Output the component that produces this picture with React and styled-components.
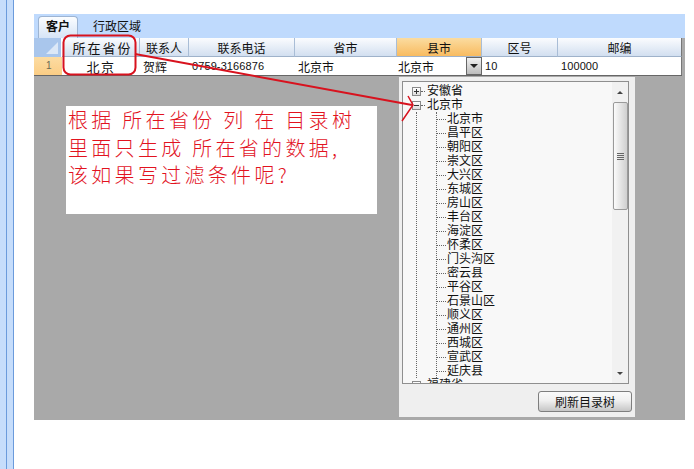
import React from "react";
import styled, { createGlobalStyle } from "styled-components";

const GlobalStyle = createGlobalStyle`
  html, body {
    margin: 0;
    padding: 0;
    background: #fff;
  }
  body {
    font-family: "Liberation Sans", "Noto Sans CJK SC", sans-serif;
    font-size: 12px;
    color: #111;
  }
`;

const Page = styled.div`
  display: flex;
  width: 694px;
  height: 469px;
  overflow: hidden;
  background: #fff;
`;

const Rail = styled.div`
  width: 6px;
  background: #c6ddfb;
  border-right: 1px solid #6b9bdc;
`;

const Main = styled.div`
  width: 651px;
  margin-left: 20px;
  padding-top: 14px;
  position: relative;
`;

const TabStrip = styled.div`
  display: flex;
  align-items: flex-end;
  height: 24px;
  padding-left: 4px;
  gap: 14px;
  background: #bfdafd;
`;

const Tab = styled.div`
  height: 22px;
  line-height: 20px;
  padding: 0 ${(p) => (p.$active ? "7px" : "0")};
  box-sizing: border-box;
  font-weight: ${(p) => (p.$active ? "bold" : "normal")};
  border: 1px solid ${(p) => (p.$active ? "#9db4d2" : "transparent")};
  border-bottom: none;
  border-radius: 4px 4px 0 0;
  background: ${(p) => (p.$active ? "linear-gradient(#fbfdff, #d6e4f6)" : "transparent")};
`;

const GridArea = styled.div`
  background: #a9a9a9;
`;

const Grid = styled.div`
  display: grid;
  width: 648px;
  grid-template-columns: 28px 78px 49px 106px 102px 85px 76px 124px;
  grid-template-rows: 19px 18px;
  border-bottom: 1px solid #666;
  box-sizing: border-box;
  height: 38px;
  background: #fff;
  box-shadow: inset -1px 0 0 #777;
`;

const Corner = styled.div`
  background: #a9c6ec;
  border-right: 1px solid #fff;
  display: flex;
  align-items: flex-end;
  justify-content: flex-end;
  padding: 0 3px 3px 0;
`;

const HeaderCell = styled.div`
  display: flex;
  align-items: center;
  justify-content: center;
  box-sizing: border-box;
  border-right: 1px solid ${(p) => (p.$last ? "#777" : "#a9bdd6")};
  border-bottom: 1px solid #9fb2ca;
  background: ${(p) =>
    p.$hot ? "linear-gradient(#fbdca0, #f8bb60)" : "linear-gradient(#fbfcfe, #d2dff0)"};
  font-size: ${(p) => (p.$big ? "13px" : "12px")};
  letter-spacing: ${(p) => (p.$big ? "2px" : "0")};
  padding-left: ${(p) => (p.$big ? "4px" : "0")};
`;

const RowHead = styled.div`
  background: linear-gradient(#fcdca2, #fbcd85);
  color: #6a6a55;
  font-size: 10px;
  padding-left: 12px;
  line-height: 17px;
`;

const Cell = styled.div`
  display: flex;
  align-items: center;
  justify-content: ${(p) => (p.$center ? "center" : "flex-start")};
  padding-left: ${(p) => (p.$center ? "0" : "3px")};
  box-sizing: border-box;
  font-size: ${(p) => (p.$big ? "13px" : "12px")};
  letter-spacing: ${(p) => (p.$big ? "1.5px" : "0")};
  height: 18px;
  overflow: hidden;
`;

const Digits = styled.span`
  font-size: 11px;
  letter-spacing: 0.1px;
`;

const ComboCell = styled(Cell)`
  padding-left: 1px;
  justify-content: space-between;
  padding-right: 0;
`;

const ComboButton = styled.div`
  width: 16px;
  height: 18px;
  box-sizing: border-box;
  border: 1px solid #666;
  background: linear-gradient(#f2f2f2, #bcbcbc);
  display: flex;
  align-items: center;
  justify-content: center;
`;

const Triangle = styled.div`
  width: 0;
  height: 0;
  border-left: ${(p) => p.$size || 4}px solid transparent;
  border-right: ${(p) => p.$size || 4}px solid transparent;
  border-top: ${(p) => (p.$up ? "0" : `${p.$size || 4}px solid ${p.$color || "#222"}`)};
  border-bottom: ${(p) => (p.$up ? `${p.$size || 4}px solid ${p.$color || "#222"}` : "0")};
`;

const Canvas = styled.div`
  position: relative;
  height: 344px;
  background: #a9a9a9;
  padding: 30px 0 0 32px;
  box-sizing: border-box;
`;

const Note = styled.div`
  width: 311px;
  height: 108px;
  background: #fff;
  color: #e2131f;
  font-family: "Noto Sans CJK SC", sans-serif;
  font-weight: 300;
  font-size: 20px;
  line-height: 27.5px;
  letter-spacing: 3.3px;
  padding: 0 0 0 2px;
  box-sizing: border-box;
  white-space: pre;
`;

const Popup = styled.div`
  position: absolute;
  left: 365px;
  top: 1px;
  width: 236px;
  height: 340px;
  box-sizing: border-box;
  background: #efefef;
  padding: 4px 6px 5px 3px;
  display: flex;
  flex-direction: column;
`;

const TreeBox = styled.div`
  height: 303px;
  box-sizing: border-box;
  border: 1px solid #8f8f8f;
  background: #f8f8f8;
  display: flex;
  overflow: hidden;
`;

const Tree = styled.div`
  flex: 1;
  padding: 2px 0 0 9px;
  overflow: hidden;
`;

const Row = styled.div`
  display: flex;
  align-items: center;
  height: 14px;
  font-size: 12px;
  line-height: 14px;
  white-space: nowrap;
`;

const Expander = styled.div`
  width: 9px;
  height: 9px;
  box-sizing: border-box;
  border: 1px solid #8a8a8a;
  background: linear-gradient(#fff, #dcdcdc);
  position: relative;
  &::before {
    content: "";
    position: absolute;
    left: 1px;
    right: 1px;
    top: 3px;
    height: 1px;
    background: #333;
  }
  &::after {
    content: "";
    display: ${(p) => (p.$open ? "none" : "block")};
    position: absolute;
    top: 1px;
    bottom: 1px;
    left: 3px;
    width: 1px;
    background: #333;
  }
`;

const Dash = styled.div`
  width: ${(p) => p.$w}px;
  margin-right: ${(p) => p.$gap}px;
  border-top: 1px dotted #666;
`;

const Branch = styled.div`
  margin-left: 4px;
  border-left: 1px dotted #666;
  padding-left: 19px;
`;

const Leaves = styled.div`
  border-left: 1px dotted #666;
  margin-bottom: 7px;
  & > div:last-child {
    margin-bottom: -7px;
  }
`;

const ScrollTrack = styled.div`
  width: 16px;
  background: #f1f1f1;
  display: flex;
  flex-direction: column;
  align-items: center;
`;

const ScrollEnd = styled.div`
  height: 20px;
  width: 100%;
  display: flex;
  align-items: center;
  justify-content: center;
  flex: none;
`;

const ScrollSpace = styled.div`
  flex: 1;
  width: 100%;
`;

const Thumb = styled.div`
  width: 15px;
  height: 108px;
  flex: none;
  box-sizing: border-box;
  border: 1px solid #9a9a9a;
  border-radius: 2px;
  background: linear-gradient(90deg, #fbfbfb, #cfcfcf);
  display: flex;
  flex-direction: column;
  align-items: center;
  justify-content: center;
  gap: 1px;
`;

const Grip = styled.div`
  width: 7px;
  height: 1px;
  background: #666;
`;

const Footer = styled.div`
  display: flex;
  justify-content: flex-end;
  padding-top: 7px;
  margin-right: -3px;
`;

const Button = styled.div`
  width: 94px;
  height: 21px;
  box-sizing: border-box;
  border: 1px solid #7e7e7e;
  border-radius: 3px;
  background: linear-gradient(#fafafa, #f0f0f0 45%, #c6c6c6);
  display: flex;
  align-items: center;
  justify-content: center;
  font-size: 12px;
`;

const Markup = styled.svg`
  position: absolute;
  left: 0;
  top: 0;
  pointer-events: none;
`;

const columns = ["联系人", "联系电话", "省市"];
const towns = [
  "北京市", "昌平区", "朝阳区", "崇文区", "大兴区", "东城区", "房山区",
  "丰台区", "海淀区", "怀柔区", "门头沟区", "密云县", "平谷区", "石景山区",
  "顺义区", "通州区", "西城区", "宣武区", "延庆县",
];

export default function App() {
  return (
    <Page>
      <GlobalStyle />
      <Rail />
      <Rail />
      <Main>
        <TabStrip>
          <Tab $active>客户</Tab>
          <Tab>行政区域</Tab>
        </TabStrip>
        <GridArea>
          <Grid>
            <Corner>
              <svg width="12" height="12" viewBox="0 0 12 12">
                <path d="M12 0V12H0Z" fill="#dce8f7" />
              </svg>
            </Corner>
            <HeaderCell $big>所在省份</HeaderCell>
            {columns.map((c) => (
              <HeaderCell key={c}>{c}</HeaderCell>
            ))}
            <HeaderCell $hot>县市</HeaderCell>
            <HeaderCell>区号</HeaderCell>
            <HeaderCell $last>邮编</HeaderCell>

            <RowHead>1</RowHead>
            <Cell $center $big>北京</Cell>
            <Cell>贺辉</Cell>
            <Cell><Digits>0759-3166876</Digits></Cell>
            <Cell>北京市</Cell>
            <ComboCell>
              北京市
              <ComboButton>
                <Triangle />
              </ComboButton>
            </ComboCell>
            <Cell><Digits>10</Digits></Cell>
            <Cell><Digits>100000</Digits></Cell>
          </Grid>
        </GridArea>
        <Canvas>
          <Note>{"根据 所在省份 列 在 目录树\n里面只生成 所在省的数据,\n该如果写过滤条件呢?"}</Note>
          <Popup>
            <TreeBox>
              <Tree>
                <Row>
                  <Expander />
                  <Dash $w={4} $gap={2} />
                  安徽省
                </Row>
                <Row>
                  <Expander $open />
                  <Dash $w={4} $gap={2} />
                  北京市
                </Row>
                <Branch>
                  <Leaves>
                    {towns.map((t) => (
                      <Row key={t}>
                        <Dash $w={9} $gap={1} />
                        {t}
                      </Row>
                    ))}
                  </Leaves>
                </Branch>
                <Row>
                  <Expander />
                  <Dash $w={4} $gap={2} />
                  福建省
                </Row>
              </Tree>
              <ScrollTrack>
                <ScrollEnd>
                  <Triangle $up $size={3} $color="#444" />
                </ScrollEnd>
                <Thumb>
                  <Grip />
                  <Grip />
                  <Grip />
                  <Grip />
                </Thumb>
                <ScrollSpace />
                <ScrollEnd>
                  <Triangle $size={3} $color="#444" />
                </ScrollEnd>
              </ScrollTrack>
            </TreeBox>
            <Footer>
              <Button>刷新目录树</Button>
            </Footer>
          </Popup>
        </Canvas>
        <Markup width="651" height="420" viewBox="34 0 651 420">
          <rect x="63.5" y="35.5" width="72" height="39" rx="7" fill="none" stroke="#d8121e" strokeWidth="2" />
          <path d="M135 54L412 105" fill="none" stroke="#d8121e" strokeWidth="2" />
          <path d="M408 96L413 105L402 121" fill="none" stroke="#d8121e" strokeWidth="1.5" />
        </Markup>
      </Main>
    </Page>
  );
}
